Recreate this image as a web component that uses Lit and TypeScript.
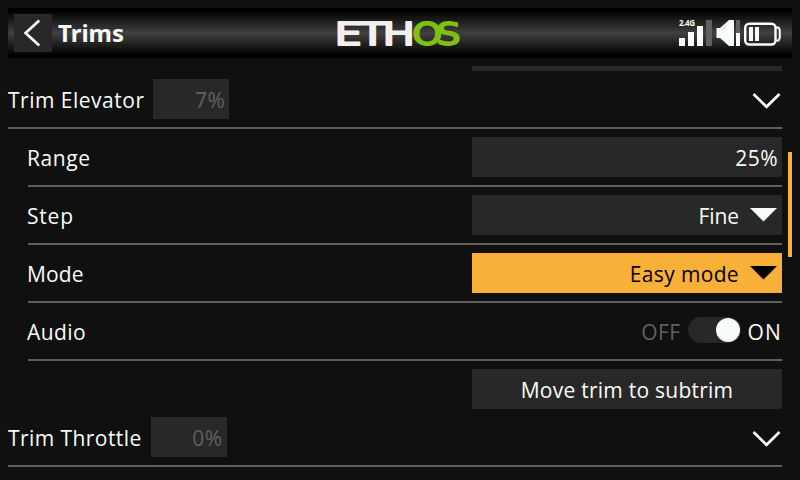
import { LitElement, html, css } from "lit";
import { customElement, property } from "lit/decorators.js";

@customElement("fit-text")
class FitText extends LitElement {
  @property() text = "";
  @property({ type: Number }) gap = 0.8;
  static styles = css`
    :host { display: inline-block; white-space: pre; }
  `;
  render() {
    return html`<span style="letter-spacing:${this.gap}px">${this.text}</span>`;
  }
}

@customElement("app-root")
class AppRoot extends LitElement {
  static styles = css`
    :host {
      display: block;
      position: relative;
      box-sizing: border-box;
      width: 800px;
      height: 480px;
      padding-top: 8px;
      overflow: hidden;
      background: #101010;
      color: #f8fcf8;
      font: 21px/40px "Open Sans", "Noto Sans", sans-serif;
    }
    header {
      display: flex;
      align-items: center;
      box-sizing: border-box;
      width: 784px;
      height: 50px;
      margin: 0 8px 8px;
      padding: 0 11px 0 6px;
      background: linear-gradient(#000 0 5%, #404040 50%, #000 95%);
    }
    .back { width: 38px; height: 38px; background: #282828; }
    h1 {
      flex: 0 0 279px;
      margin: 0 0 0 6px;
      font: bold 24px/38px "Noto Sans", "Open Sans", sans-serif;
    }
    .status { margin-left: auto; }
    svg { display: block; overflow: visible; }
    main { width: 774px; padding-left: 8px; }
    .row {
      display: flex;
      align-items: center;
      box-sizing: border-box;
      height: 58px;
      border-bottom: 2px solid #606060;
    }
    .row > fit-text, .switch fit-text { padding-top: 2px; }
    .box fit-text { padding-top: 1px; }
    .sub { margin-left: 20px; }
    .sub > fit-text { margin-left: -1px; }
    .box {
      display: flex;
      justify-content: flex-end;
      box-sizing: border-box;
      height: 40px;
      background: #282828;
    }
    .small { width: 76px; padding-right: 4px; color: #606060; margin-left: 9px; }
    .wide { width: 310px; margin-left: auto; padding-right: 4px; }
    .pick { padding-right: 5px; gap: 11px; }
    .pick svg { margin-top: 13px; }
    .active { background: #f8b038; color: #000; }
    .chev { margin: 4px 2px 0 auto; }
    .previous { height: 5px; }
    .button { margin-top: 8px; justify-content: center; padding: 0; }
    .switch { display: flex; align-items: center; margin-left: auto; }
    .off { color: #606060; margin-right: 8px; }
    .track {
      display: flex;
      justify-content: flex-end;
      box-sizing: border-box;
      width: 53px;
      height: 26px;
      padding: 1px;
      margin: -3px 6px 0 0;
      border-radius: 13px;
      background: #282828;
    }
    .knob { width: 24px; height: 24px; border-radius: 50%; background: #f8fcf8; }
    .scroll {
      position: absolute;
      left: 788px;
      top: 152px;
      width: 4px;
      height: 105px;
      background: #f8b038;
    }
  `;

  private group(name: string, value: string, nameGap: number) {
    return html`<div class="row">
      <fit-text .text=${name} .gap=${nameGap}></fit-text>
      <div class="box small"><fit-text .text=${value} .gap=${0.5}></fit-text></div>
      <svg class="chev" width="28" height="18" viewBox="0 0 28 18">
        <path d="M1.5 2 14.5 14.8 27.5 2" fill="none" stroke="#f8fcf8" stroke-width="2.7" />
      </svg>
    </div>`;
  }

  private pick(value: string, gap: number, active = false) {
    return html`<div class="box wide pick ${active ? "active" : ""}">
      <fit-text .text=${value} .gap=${gap}></fit-text>
      <svg width="27" height="14" viewBox="0 0 27 14"><path d="M0 0H27L13.5 13.5Z" fill="currentColor" /></svg>
    </div>`;
  }

  private line(name: string, gap: number, control: unknown) {
    return html`<div class="row sub"><fit-text .text=${name} .gap=${gap}></fit-text>${control}</div>`;
  }

  render() {
    return html`
      <header>
        <div class="back">
          <svg width="38" height="38"><path d="M25.2 6.5 11.6 19 25.2 31.5" fill="none" stroke="#f8fcf8" stroke-width="2.7" /></svg>
        </div>
        <h1>Trims</h1>
        <svg width="126" height="38" font-family="DejaVu Sans" font-size="32.5" stroke-width="1.8" stroke-linejoin="round">
          <text transform="translate(-2.5 31.1) scale(1.33 1)" x="0 18.8 36.1" y="0" fill="#f0f0f0" stroke="#f0f0f0">ETH</text>
          <text transform="translate(75.2 31.1) scale(1.17 1)" x="0 20.8" y="0" fill="#80c010" stroke="#80c010">OS</text>
        </svg>
        <svg class="status" width="103" height="30" viewBox="678 18 103 30" fill="#f8fcf8">
          <text x="679" y="26" font-family="Noto Sans" font-weight="bold" font-size="8" textLength="16">2.4G</text>
          <path d="M679 38h6v8h-6zM688 32h6v14h-6zM697 26h6v20h-6z" />
          <path d="M706 20h6v26h-6zM736 20h4v13h-4z" fill="#606060" />
          <path d="M716.5 28h3.5L729 20h5v26h-5L720 38h-3.5zM736 33h4v13h-4z" />
          <path d="M721.5 30.5 726.5 25.5" fill="none" stroke="#b0b4b0" stroke-width="0.6" />
          <path d="M749 27h4v14h-4zM755 27h4v14h-4z" />
          <rect x="745.2" y="23.7" width="30.3" height="20.8" rx="4" fill="none" stroke="#f8fcf8" stroke-width="2.4" />
          <path d="M775.5 27.5h3l1.3 2.5v8l-1.3 2.5h-3" fill="none" stroke="#f8fcf8" stroke-width="2" />
        </svg>
      </header>
      <main>
        <div class="box wide previous"></div>
        ${this.group("Trim Elevator", "7%", 0.5)}
        ${this.line("Range", 0.6, html`<div class="box wide"><fit-text .text=${"25%"} .gap=${0.5}></fit-text></div>`)}
        ${this.line("Step", 0.8, this.pick("Fine", -0.1))}
        ${this.line("Mode", 0.1, this.pick("Easy mode", 0.35, true))}
        ${this.line("Audio", 0.4, html`<div class="switch">
          <fit-text class="off" .text=${"OFF"} .gap=${0.4}></fit-text>
          <div class="track"><div class="knob"></div></div>
          <fit-text .text=${"ON"} .gap=${1.2}></fit-text>
        </div>`)}
        <div class="box wide button"><fit-text .text=${"Move trim to subtrim"} .gap=${0.25}></fit-text></div>
        ${this.group("Trim Throttle", "0%", 0.43)}
      </main>
      <div class="scroll"></div>
    `;
  }
}
